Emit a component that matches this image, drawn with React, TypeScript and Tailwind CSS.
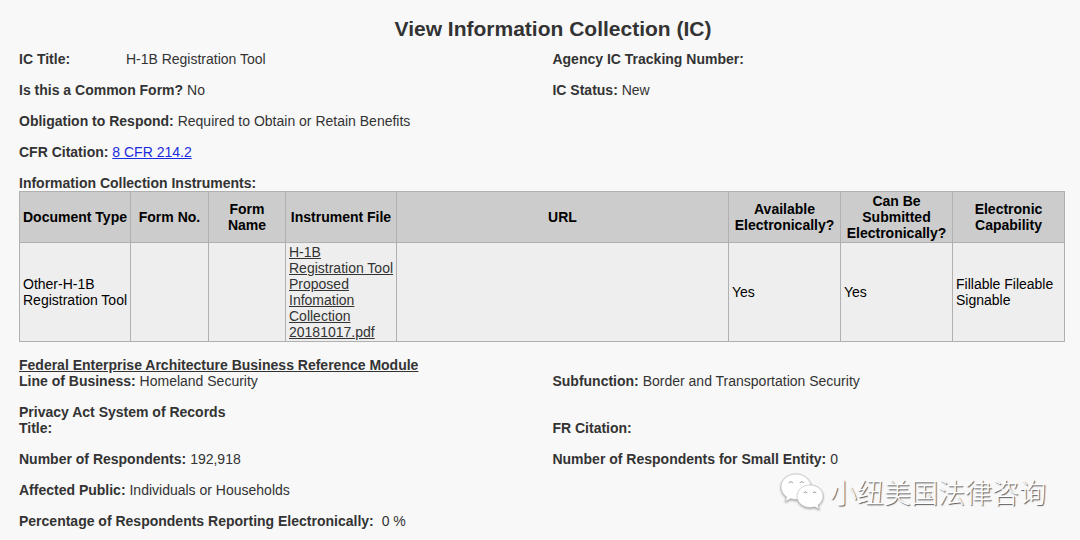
import type { ReactNode } from 'react';

interface FieldProps {
  label: string;
  children?: ReactNode;
  labelClass?: string;
}

interface Column {
  title: string;
  width: string;
}

const columns: Column[] = [
  { title: 'Document Type', width: 'w-[111px]' },
  { title: 'Form No.', width: 'w-[78px]' },
  { title: 'Form Name', width: 'w-[77px]' },
  { title: 'Instrument File', width: 'w-[111px]' },
  { title: 'URL', width: '' },
  { title: 'Available Electronically?', width: 'w-[112px]' },
  { title: 'Can Be Submitted Electronically?', width: 'w-[112px]' },
  { title: 'Electronic Capability', width: 'w-[112px]' },
];

function Field({ label, children, labelClass = '' }: FieldProps) {
  return (
    <p>
      <strong className={labelClass}>{label}</strong> {children}
    </p>
  );
}

function Row({ children }: { children: ReactNode }) {
  return <div className="grid grid-cols-[51%_1fr] items-end">{children}</div>;
}

function InstrumentsTable() {
  const cell = 'border border-[#b0b0b0] py-px pl-[3px]';

  return (
    <table className="w-full table-fixed border-collapse text-black">
      <thead className="bg-[#cccccc]">
        <tr>
          {columns.map((col) => (
            <th key={col.title} scope="col" className={`border border-[#b0b0b0] py-px text-center ${col.width}`}>
              {col.title}
            </th>
          ))}
        </tr>
      </thead>
      <tbody className="bg-[#eeeeee]">
        <tr>
          <td className={cell}>Other-H-1B Registration Tool</td>
          <td className={cell}></td>
          <td className={cell}></td>
          <td className={cell}>
            <a href="#instrument" className="text-[#333333] underline">
              H-1B Registration Tool Proposed Infomation Collection 20181017.pdf
            </a>
          </td>
          <td className={cell}></td>
          <td className={cell}>Yes</td>
          <td className={cell}>Yes</td>
          <td className={cell}>Fillable Fileable Signable</td>
        </tr>
      </tbody>
    </table>
  );
}

function ChatBubbles() {
  return (
    <svg width="44" height="38" viewBox="0 0 44 38" aria-hidden="true" className="drop-shadow-[0_1px_1px_#999999]">
      <g fill="#ffffff" stroke="#b8b8b8" strokeWidth="0.6" strokeLinejoin="round">
        <path d="M16 1C7.700 1 1 6.700 1 14c0 4.200 2.200 7.700 5.700 10L5.200 28.500l5.400-2.800c1.700.5 3.500.8 5.400.8 8.300 0 15-5.700 15-12.500S24.300 1 16 1z" />
        <path d="M30 12c-7.400 0-13 5-13 11.200S22.600 34.500 30 34.500c1.700 0 3.200-.3 4.600-.7l4.700 2.500-1.300-4.100c3-2.100 5-5.300 5-9C43 17 37.400 12 30 12z" />
      </g>
      <g fill="none" stroke="#999999" strokeWidth="1" strokeLinecap="round">
        <path d="M9 9.500q1.800-2 3.600 0M20 9.500q1.800-2 3.600 0" />
        <path d="M24 19.500q1.500-1.500 3 0M33 19.500q1.500-1.500 3 0" />
      </g>
    </svg>
  );
}

function Watermark() {
  return (
    <div className="absolute top-[472px] right-[34px] flex items-center gap-1.5">
      <ChatBubbles />
      <span className="font-['Noto_Sans_CJK_SC',sans-serif] text-[27px] leading-10 font-light text-white [text-shadow:1px_1px_1px_#555555]">
        小纽美国法律咨询
      </span>
    </div>
  );
}

export default function App() {
  return (
    <main className="relative min-h-screen bg-[#f8f8f8] pt-[17px] pr-[15px] pb-2 pl-[19px] font-['Liberation_Sans',Arial,sans-serif] text-[14px] leading-4 text-[#333333]">
      <h1 className="pl-[22px] text-center text-[21px] leading-6 font-bold">View Information Collection (IC)</h1>

      <section className="mt-[10px] flex flex-col gap-[15px]">
        <Row>
          <Field label="IC Title:" labelClass="inline-block w-[103px]">
            H-1B Registration Tool
          </Field>
          <Field label="Agency IC Tracking Number:" />
        </Row>
        <Row>
          <Field label="Is this a Common Form?">No</Field>
          <Field label="IC Status:">New</Field>
        </Row>
        <Field label="Obligation to Respond:">Required to Obtain or Retain Benefits</Field>
        <Field label="CFR Citation:">
          <a href="#cfr" className="text-[#1a2be0] underline">
            8 CFR 214.2
          </a>
        </Field>
        <div>
          <h2 className="font-bold">Information Collection Instruments:</h2>
          <InstrumentsTable />
        </div>
      </section>

      <section className="mt-[15px] flex flex-col gap-[15px]">
        <div>
          <h2 className="font-bold underline">Federal Enterprise Architecture Business Reference Module</h2>
          <Row>
            <Field label="Line of Business:">Homeland Security</Field>
            <Field label="Subfunction:">Border and Transportation Security</Field>
          </Row>
        </div>
        <div>
          <h2 className="font-bold">Privacy Act System of Records</h2>
          <Row>
            <Field label="Title:" />
            <Field label="FR Citation:" />
          </Row>
        </div>
        <Row>
          <Field label="Number of Respondents:">192,918</Field>
          <Field label="Number of Respondents for Small Entity:">0</Field>
        </Row>
        <Field label="Affected Public:">Individuals or Households</Field>
        <Field label="Percentage of Respondents Reporting Electronically:" labelClass="mr-1">
          0 %
        </Field>
      </section>

      <Watermark />
    </main>
  );
}
